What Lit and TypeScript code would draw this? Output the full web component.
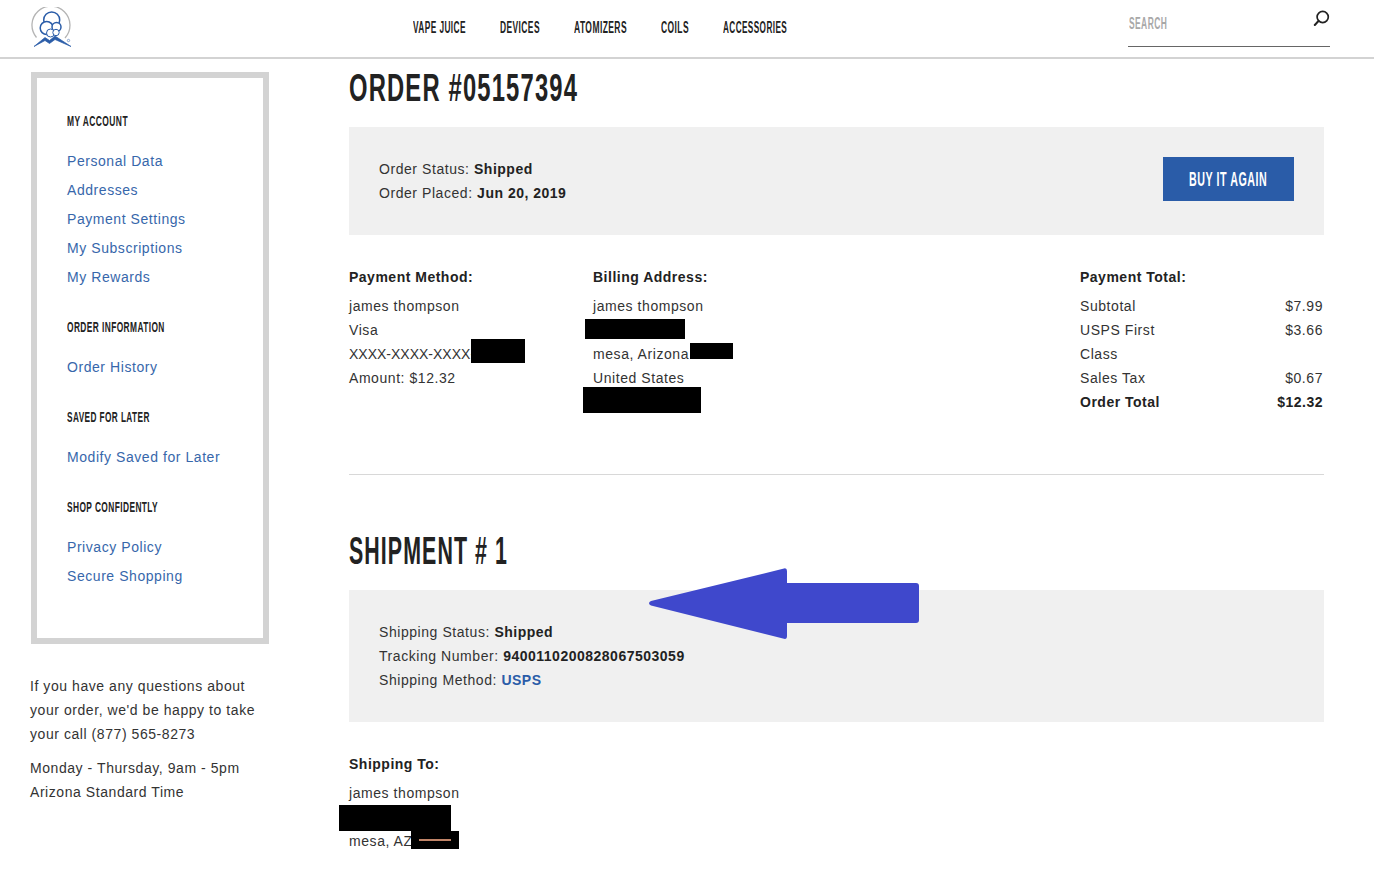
import { LitElement, html, css, svg } from "lit";
import { customElement, property } from "lit/decorators.js";

/* Condensed display text: real text, squeezed horizontally to a target width. */
@customElement("fit-text")
class FitText extends LitElement {
  @property({ type: Number }) w = 100;
  @property() text = "";
  static styles = css`
    :host { display: inline-block; vertical-align: top; white-space: nowrap; letter-spacing: 0.05em; }
    .t { display: inline-block; transform-origin: 0 50%; }
  `;
  render() {
    return html`<span class="t">${this.text}</span>`;
  }
  updated() {
    const t = this.renderRoot.querySelector(".t") as HTMLElement;
    t.style.transform = "none";
    const natural = t.offsetWidth || 1;
    t.style.transform = `scaleX(${this.w / natural})`;
    this.style.width = `${this.w}px`;
  }
}

const NAV: [string, number][] = [
  ["VAPE JUICE", 53],
  ["DEVICES", 40],
  ["ATOMIZERS", 53],
  ["COILS", 28],
  ["ACCESSORIES", 64],
];

const SIDE: { h: string; w: number; links: string[] }[] = [
  { h: "MY ACCOUNT", w: 61, links: ["Personal Data", "Addresses", "Payment Settings", "My Subscriptions", "My Rewards"] },
  { h: "ORDER INFORMATION", w: 98, links: ["Order History"] },
  { h: "SAVED FOR LATER", w: 83, links: ["Modify Saved for Later"] },
  { h: "SHOP CONFIDENTLY", w: 91, links: ["Privacy Policy", "Secure Shopping"] },
];

const logo = svg`
  <path d="M6.5 30.5 A19 19 0 1 1 35 31" fill="none" stroke="#b4b4b4" stroke-width="1.3"/>
  <g fill="#fff" stroke="#2a5ca8" stroke-width="1.5">
    <circle cx="21.7" cy="13" r="8"/>
    <circle cx="16.7" cy="21" r="6.5"/>
    <circle cx="26.5" cy="20" r="4.5"/>
    <circle cx="20.5" cy="26" r="4" stroke-width="1"/>
    <circle cx="26" cy="25.5" r="3.2" stroke-width="1"/>
  </g>
  <path d="M4 39.5 L15 30.5 L19.5 33.5 L25 29 L41 39.5 L25 32.5 L19.5 36.5 L15 33.5 Z" fill="#2a5ca8" stroke="#2a5ca8" stroke-width=".7" stroke-linejoin="round"/>
  <circle cx="38.5" cy="33.5" r="1.2" fill="none" stroke="#2a5ca8" stroke-width=".5"/>
`;

@customElement("app-root")
class AppRoot extends LitElement {
  static styles = css`
    :host {
      display: block;
      font-family: "Liberation Sans", Arial, sans-serif;
      font-size: 14px;
      line-height: 24px;
      letter-spacing: 0.56px;
      color: #333;
      background: #fff;
    }
    a { color: #3767ab; text-decoration: none; }
    b { color: #222; letter-spacing: 0.5px; }
    b.usps { color: #2a5ca8; }
    .disp { font-weight: 700; color: #222; }

    header {
      height: 57px;
      border-bottom: 2px solid #d3d3d3;
      display: grid;
      grid-template-columns: 413px 1fr 246px;
    }
    .logo { padding: 7px 0 0 30px; }
    .logo svg { display: block; width: 42px; height: 42px; }
    nav { display: flex; gap: 34px; padding-top: 16px; font-size: 16px; }
    .search {
      width: 202px;
      height: 46px;
      border-bottom: 1px solid #666;
      display: flex;
      justify-content: space-between;
    }
    .search .ph { padding: 12px 0 0 1px; font-size: 16px; color: #a8a8a8; font-weight: 700; }
    .search svg { margin-top: 10px; width: 17px; height: 16px; }

    .page {
      display: grid;
      grid-template-columns: 319px 975px;
      padding-left: 30px;
    }
    .side { padding: 13px 0 0 1px; }
    .box {
      width: 238px;
      box-sizing: border-box;
      border: 6px solid #d3d3d3;
      padding: 31px 30px 50px;
    }
    .box section + section { margin-top: 26px; }
    .box h4 { margin: 0 0 16px; font-size: 15.5px; font-weight: 700; line-height: 24px; color: #222; }
    .box a { display: block; }
    .box a + a { margin-top: 5px; }
    .help { margin: 30px 0 0 -1px; width: 240px; }
    .help p { margin: 0; }
    .help p + p { margin-top: 10px; }

    main { min-width: 0; }
    h1 {
      margin: 0 0 10px;
      font-size: 39px;
      line-height: 58px;
      height: 58px;
      font-weight: 700;
      color: #222;
    }
    .panel {
      background: #f0f0f0;
      padding: 30px;
      display: flex;
      justify-content: space-between;
      align-items: flex-start;
    }
    .btn {
      width: 131px;
      height: 44px;
      box-sizing: border-box;
      padding-right: 2px;
      background: #2a5ca8;
      color: #fff;
      font-size: 20px;
      font-weight: 700;
      line-height: 44px;
      text-align: center;
    }
    .cols {
      display: grid;
      grid-template-columns: 244px 487px 243px;
      margin-top: 30px;
    }
    .lbl { font-weight: 700; color: #222; margin-bottom: 5px; letter-spacing: 0.5px; }
    .col { position: relative; }
    .card { letter-spacing: 0; }
    .spacer { height: 24px; }
    .tot { display: flex; justify-content: space-between; }
    .tot span:first-child { max-width: 100px; }
    hr { border: 0; height: 1px; background: #d8d8d8; margin: 60px 0 47px; }
    .to { margin-top: 30px; position: relative; }

    .red { position: absolute; background: #000; }
    .r-card { left: 122px; top: 74px; width: 54px; height: 24px; }
    .r-street { left: -8px; top: 54px; width: 100px; height: 20px; }
    .r-zip { left: 97px; top: 78px; width: 43px; height: 16px; }
    .r-phone { left: -10px; top: 122px; width: 118px; height: 26px; }
    .r-ship { left: -10px; top: 53px; width: 112px; height: 26px; }
    .r-ship2 { left: 62px; top: 79px; width: 48px; height: 18px; }
    .r-ship2::after {
      content: "";
      position: absolute;
      left: 8px;
      top: 8px;
      width: 32px;
      height: 2px;
      background: #c08468;
    }
    .arrow { position: absolute; left: 647px; top: 566px; width: 273px; height: 74px; }
  `;

  render() {
    return html`
      <header>
        <div class="logo"><svg viewBox="0 0 42 42">${logo}</svg></div>
        <nav>
          ${NAV.map(([t, w]) => html`<fit-text class="disp" .text=${t} .w=${w}></fit-text>`)}
        </nav>
        <div class="search">
          <fit-text class="ph" .text=${"SEARCH"} .w=${38}></fit-text>
          <svg viewBox="0 0 17 16"><circle cx="9.7" cy="7" r="5.6" fill="none" stroke="#222" stroke-width="1.7"/><path d="M5.5 11 L1.8 15" stroke="#222" stroke-width="2" stroke-linecap="round"/></svg>
        </div>
      </header>
      <div class="page">
        <aside class="side">
          <div class="box">
            ${SIDE.map(
              (s) => html`<section>
                <h4><fit-text .text=${s.h} .w=${s.w}></fit-text></h4>
                ${s.links.map((l) => html`<a href="#">${l}</a>`)}
              </section>`
            )}
          </div>
          <div class="help">
            <p>If you have any questions about your order, we'd be happy to take your call (877) 565-8273</p>
            <p>Monday - Thursday, 9am - 5pm<br />Arizona Standard Time</p>
          </div>
        </aside>
        <main>
          <h1><fit-text .text=${"ORDER #05157394"} .w=${229}></fit-text></h1>
          <div class="panel">
            <div>
              <div>Order Status: <b>Shipped</b></div>
              <div>Order Placed: <b>Jun 20, 2019</b></div>
            </div>
            <div class="btn"><fit-text .text=${"BUY IT AGAIN"} .w=${78}></fit-text></div>
          </div>
          <div class="cols">
            <div class="col">
              <div class="lbl">Payment Method:</div>
              <div>james thompson</div>
              <div>Visa</div>
              <div class="card">XXXX-XXXX-XXXX-</div>
              <div>Amount: $12.32</div>
              <div class="red r-card"></div>
            </div>
            <div class="col">
              <div class="lbl">Billing Address:</div>
              <div>james thompson</div>
              <div class="spacer"></div>
              <div>mesa, Arizona</div>
              <div>United States</div>
              <div class="spacer"></div>
              <div class="red r-street"></div>
              <div class="red r-zip"></div>
              <div class="red r-phone"></div>
            </div>
            <div class="col">
              <div class="lbl">Payment Total:</div>
              <div class="tot"><span>Subtotal</span><span>$7.99</span></div>
              <div class="tot"><span>USPS First Class</span><span>$3.66</span></div>
              <div class="tot"><span>Sales Tax</span><span>$0.67</span></div>
              <div class="tot"><b>Order Total</b><b>$12.32</b></div>
            </div>
          </div>
          <hr />
          <h1><fit-text .text=${"SHIPMENT # 1"} .w=${159}></fit-text></h1>
          <div class="panel">
            <div>
              <div>Shipping Status: <b>Shipped</b></div>
              <div>Tracking Number: <b>9400110200828067503059</b></div>
              <div>Shipping Method: <a href="#"><b class="usps">USPS</b></a></div>
            </div>
          </div>
          <div class="to">
            <div class="lbl">Shipping To:</div>
            <div>james thompson</div>
            <div class="spacer"></div>
            <div>mesa, AZ</div>
            <div class="red r-ship"></div>
            <div class="red r-ship2"></div>
          </div>
        </main>
      </div>
      <svg class="arrow" viewBox="0 0 273 74">
        <path d="M4 35 L137 2.5 Q140 1.8 140 5 L140 17 L269 17 Q272 17 272 20 L272 54 Q272 57 269 57 L140 57 L140 70 Q140 73.5 137 72.8 L4 39.5 Q0 37.2 4 35 Z" fill="#3f48cc"/>
      </svg>
    `;
  }
}
